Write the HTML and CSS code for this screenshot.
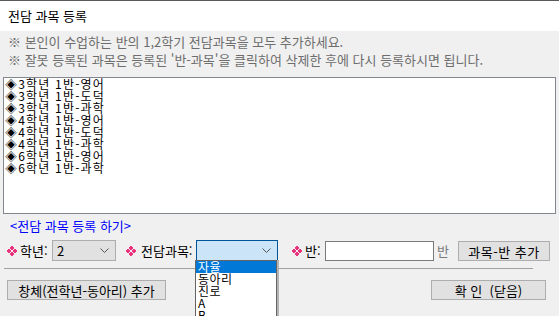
FILE: index.html
```html
<!DOCTYPE html>
<html lang="ko">
<head>
<meta charset="utf-8">
<link rel="stylesheet" href="styles.css">
</head>
<body>
<div class="window">
  <div class="titlebar">전담 과목 등록</div>
  <div class="notes">
    <div>※ 본인이 수업하는 반의 1,2학기 전담과목을 모두 추가하세요.</div>
    <div>※ 잘못 등록된 과목은 등록된 '반-과목'을 클릭하여 삭제한 후에 다시 등록하시면 됩니다.</div>
  </div>
  <div class="listbox">
    <div class="item">◈3학년 1반-영어</div>
    <div class="item">◈3학년 1반-도덕</div>
    <div class="item">◈3학년 1반-과학</div>
    <div class="item">◈4학년 1반-영어</div>
    <div class="item">◈4학년 1반-도덕</div>
    <div class="item">◈4학년 1반-과학</div>
    <div class="item">◈6학년 1반-영어</div>
    <div class="item">◈6학년 1반-과학</div>
  </div>
  <div class="link">&lt;전담 과목 등록 하기&gt;</div>
  <div class="form-row">
    <svg class="bullet b1" width="10" height="10" viewBox="0 0 10 10"><path d="M4 0h2v1h1v2h-1v1h-2v-1h-1v-2h1z M4 6h2v1h1v2h-1v1h-2v-1h-1v-2h1z M0 4h1v-1h2v1h1v2h-1v1h-2v-1h-1z M6 4h1v-1h2v1h1v2h-1v1h-2v-1h-1z" fill="#e8347c"/></svg>
    <span class="label l-grade">학년:</span>
    <div class="select s-grade"><span>2</span><svg class="chev" width="9" height="5" viewBox="0 0 9 5"><path d="M0.5 0.5L4.5 4.5L8.5 0.5" fill="none" stroke="#555" stroke-width="1"/></svg></div>
    <svg class="bullet b2" width="10" height="10" viewBox="0 0 10 10"><path d="M4 0h2v1h1v2h-1v1h-2v-1h-1v-2h1z M4 6h2v1h1v2h-1v1h-2v-1h-1v-2h1z M0 4h1v-1h2v1h1v2h-1v1h-2v-1h-1z M6 4h1v-1h2v1h1v2h-1v1h-2v-1h-1z" fill="#e8347c"/></svg>
    <span class="label l-subject">전담과목:</span>
    <div class="select s-subject focus"><span></span><svg class="chev" width="9" height="5" viewBox="0 0 9 5"><path d="M0.5 0.5L4.5 4.5L8.5 0.5" fill="none" stroke="#555" stroke-width="1"/></svg></div>
    <svg class="bullet b3" width="10" height="10" viewBox="0 0 10 10"><path d="M4 0h2v1h1v2h-1v1h-2v-1h-1v-2h1z M4 6h2v1h1v2h-1v1h-2v-1h-1v-2h1z M0 4h1v-1h2v1h1v2h-1v1h-2v-1h-1z M6 4h1v-1h2v1h1v2h-1v1h-2v-1h-1z" fill="#e8347c"/></svg>
    <span class="label l-class">반:</span>
    <div class="textbox"></div>
    <span class="unit">반</span>
    <div class="btn btn-add">과목-반 추가</div>
  </div>
  <div class="divider"></div>
  <div class="bottom-row">
    <div class="btn btn-club">창체(전학년-동아리) 추가</div>
    <div class="btn btn-ok">확 인 &nbsp;(닫음)</div>
  </div>
  <div class="dropdown">
    <div class="opt selected">자율</div>
    <div class="opt">동아리</div>
    <div class="opt">진로</div>
    <div class="opt">A</div>
    <div class="opt">B</div>
  </div>
</div>
</body>
</html>
```
FILE: styles.css
```css
html, body {
  margin: 0;
  padding: 0;
  background: #f0f0f0;
  overflow: hidden;
}
.window {
  position: relative;
  width: 559px;
  height: 316px;
  font-family: "Noto Sans CJK KR", "Noto Sans", sans-serif;
  font-size: 12px;
  color: #000;
}
.titlebar {
  border-top: 1px solid #5a5a5a;
  background: #fff;
  height: 30px;
  line-height: 30px;
  padding-left: 8px;
  font-size: 13px;
}
.notes {
  padding: 2px 8px 0 8px;
  color: #6d6d6d;
  line-height: 18px;
  font-size: 13px;
}
.listbox {
  margin: 8px 3px 0 3px;
  height: 135px;
  border: 1px solid #828790;
  background: #fff;
  padding-left: 1px;
  overflow: hidden;
}
.item {
  line-height: 12px;
  height: 12px;
  font-size: 12px;
  letter-spacing: 1.2px;
  white-space: nowrap;
}
.link {
  margin-top: 5px;
  padding-left: 10px;
  line-height: 14px;
  font-size: 13px;
  color: #0000ff;
}
.form-row {
  display: flex;
  align-items: center;
  margin-top: 7px;
  height: 21px;
  padding-left: 7px;
}
.bullet {
  flex: none;
  display: block;
}
.label {
  flex: none;
  line-height: 21px;
  font-size: 13px;
}
.l-grade { margin-left: 3px; width: 32px; }
.b2 { margin-left: 10px; }
.l-subject { margin-left: 5px; width: 55px; }
.b3 { margin-left: 14px; }
.l-class { margin-left: 3px; width: 20px; }
.select {
  flex: none;
  box-sizing: border-box;
  height: 21px;
  border: 1px solid #adadad;
  background: #e1e1e1;
  display: flex;
  align-items: center;
  justify-content: space-between;
  padding: 0 6px 0 4px;
  font-size: 13px;
}
.s-grade { width: 64px; }
.s-subject { width: 82px; }
.select.focus {
  background: #cce4f7;
  border-color: #005499;
}
.chev { display: block; }
.textbox {
  flex: none;
  box-sizing: border-box;
  width: 109px;
  height: 20px;
  margin-top: 1px;
  background: #fff;
  border: 1px solid #7a7a7a;
}
.unit {
  flex: none;
  margin-left: 3px;
  color: #7a7a7a;
  font-size: 13px;
  width: 21px;
}
.btn {
  flex: none;
  box-sizing: border-box;
  height: 20px;
  border: 1px solid #adadad;
  background: #e1e1e1;
  display: flex;
  align-items: center;
  justify-content: center;
  font-size: 13px;
  white-space: nowrap;
}
.btn-add {
  width: 92px;
  margin-top: 1px;
  letter-spacing: 0.5px;
}
.divider {
  margin: 7px 0 0 4px;
  width: 529px;
  height: 1px;
  background: #a0a0a0;
}
.bottom-row {
  display: flex;
  justify-content: space-between;
  margin-top: 11px;
  padding: 0 13px 0 7px;
}
.btn-club { width: 159px; }
.btn-ok { width: 115px; }
.dropdown {
  position: absolute;
  left: 195px;
  top: 260px;
  width: 80px;
  height: 60px;
  background: #fff;
  border: 1px solid #646464;
  border-bottom: none;
  box-shadow: 2px 0 0 #b4b4b4;
}
.opt {
  height: 12px;
  line-height: 12px;
  padding-left: 2px;
  font-size: 12px;
  letter-spacing: 0.5px;
}
.opt.selected {
  background: #0078d7;
  color: #fff;
}
```
